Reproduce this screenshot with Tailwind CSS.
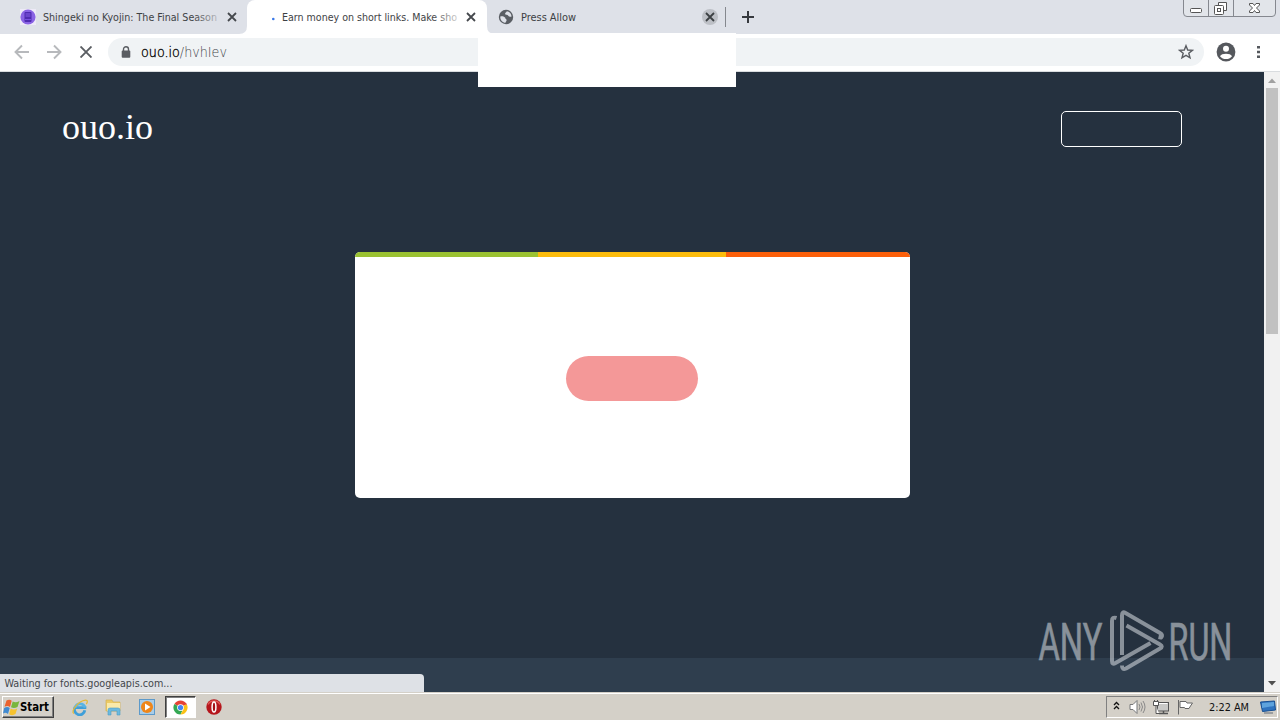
<!DOCTYPE html>
<html lang="en">
<head>
<meta charset="utf-8">
<title>ouo.io</title>
<script src="https://cdn.jsdelivr.net/npm/@tailwindcss/browser@4"></script>
</head>
<body class="w-[1280px] h-[720px] overflow-hidden flex flex-col relative bg-[#d4d0c8] font-['DejaVu_Sans_Condensed','DejaVu_Sans',sans-serif]">

<!-- Tab strip -->
<header class="h-[34px] shrink-0 bg-[#dee1e8] flex text-[11px] text-[#3c4043] relative">
  <div class="w-[247px] h-full flex items-center pl-5 shrink-0">
    <svg class="w-4 h-4 shrink-0" viewBox="0 0 16 16"><rect width="16" height="16" fill="#eeeaf8"/><circle cx="8" cy="8" r="7.6" fill="#8a63e4"/><rect x="4.500" y="3" width="7" height="10" rx="1" fill="#4f2bb0"/><rect x="5.500" y="4" width="5" height="4" fill="#6a43cb"/><path d="M5 10.500h6" stroke="#7950df"/></svg>
    <svg class="ml-[7px] w-[177px] h-5 shrink-0 overflow-visible" viewBox="0 0 177 20"><defs><linearGradient id="f1" gradientUnits="userSpaceOnUse" x1="150" x2="176" y1="0" y2="0"><stop stop-color="#3c4043"/><stop offset="1" stop-color="#3c4043" stop-opacity=".2"/></linearGradient></defs><text x="0" y="14" font-size="11" textLength="174" lengthAdjust="spacingAndGlyphs" fill="url(#f1)">Shingeki no Kyojin: The Final Season</text></svg>
    <svg class="ml-[7px] w-[10px] h-[10px]" viewBox="0 0 10 10"><path d="M1 1l8 8M9 1l-8 8" stroke="#45484d" stroke-width="1.8"/></svg>
  </div>
  <div class="w-[240px] h-full bg-white rounded-t-lg flex items-center shrink-0 relative">
    <svg class="ml-[25px] mt-1 w-[3px] h-[4px] shrink-0" viewBox="0 0 3 4"><circle cx="1.3" cy="2" r="1.3" fill="#3978e8"/></svg>
    <svg class="ml-[7px] w-[179px] h-5 shrink-0 overflow-visible" viewBox="0 0 179 20"><defs><linearGradient id="f2" gradientUnits="userSpaceOnUse" x1="150" x2="177" y1="0" y2="0"><stop stop-color="#3c4043"/><stop offset="1" stop-color="#3c4043" stop-opacity=".2"/></linearGradient></defs><text x="0" y="14" font-size="11" textLength="175" lengthAdjust="spacingAndGlyphs" fill="url(#f2)">Earn money on short links. Make sho</text></svg>
    <svg class="ml-[5px] w-[10px] h-[10px]" viewBox="0 0 10 10"><path d="M1 1l8 8M9 1l-8 8" stroke="#45484d" stroke-width="1.8"/></svg>
    <svg class="absolute -left-2 bottom-0 w-2 h-2" viewBox="0 0 8 8"><path d="M8 0v8H0Q8 8 8 0" fill="#fff"/></svg>
    <svg class="absolute -right-2 bottom-0 w-2 h-2" viewBox="0 0 8 8"><path d="M0 0v8h8Q0 8 0 0" fill="#fff"/></svg>
  </div>
  <div class="w-[239px] h-full flex items-center pl-[11px] shrink-0">
    <svg class="w-4 h-4 shrink-0" viewBox="0 0 16 16"><circle cx="8" cy="8" r="7.2" fill="#5a5e64"/><path d="M2.3 7.4c2.500-.5 4 .2 5 1.300-.2 1.500 1.500 1 1.300 2.500-.1 1.300-1.100 1.200-1 2.600C4.300 13.700 2 11 2.300 7.400zM8.800 2.300c-.3 1.500-1.800 1.200-1.700 2.700.8 1.500 2.300.4 3.200 1.700.6 1.100 2 1.200 3.300.7-.3-2.700-2.200-4.700-4.800-5.100z" fill="#dee1e8"/></svg>
    <svg class="ml-[7px] w-[181px] h-5 shrink-0" viewBox="0 0 181 20"><text x="0" y="14" font-size="11" textLength="55" lengthAdjust="spacingAndGlyphs" fill="#3c4043">Press Allow</text></svg>
    <svg class="w-4 h-4 shrink-0" viewBox="0 0 16 16"><circle cx="8" cy="8" r="8" fill="#bdc0c6"/><path d="M4 4l8 8M12 4l-8 8" stroke="#3c4043" stroke-width="1.8"/></svg>
    <div class="ml-[7px] w-px h-5 bg-[#85888e]"></div>
  </div>
  <div class="flex items-center pl-4"><svg class="w-3 h-3" viewBox="0 0 12 12"><path d="M6 0v12M0 6h12" stroke="#36393e" stroke-width="2"/></svg></div>
  <svg class="ml-auto mr-[4px] w-[93px] h-[18px]" viewBox="0 0 93 18"><path d="M.5 0v13q0 3.500 3.500 3.500h85q3.500 0 3.500-3.500V0M25.500 0v16.500M50.500 0v16.500" fill="#e2e5ea" stroke="#85888f"/><rect x="7.500" y="8.500" width="11" height="4" rx="1" fill="#fff" stroke="#555"/><path d="M35.500 2.500h8v8h-8z" fill="#fff" stroke="#555"/><rect x="31.500" y="5.500" width="9" height="9" rx="1" fill="#fff" stroke="#555"/><rect x="34.500" y="8.500" width="3" height="3" fill="#fff" stroke="#555"/><path d="M66.500 3.500h3.500l1.500 2 1.500-2h3.500v1.500l-3 3 3 3v1.500h-3.500l-1.500-2-1.500 2h-3.500v-1.500l3-3-3-3z" fill="#fff" stroke="#555"/></svg>
</header>

<!-- Toolbar -->
<div class="h-[38px] shrink-0 bg-white border-b border-[#d9dcdf] flex items-center pb-[2px]">
  <svg class="ml-[14px] w-4 h-4" viewBox="0 0 16 16"><path d="M15 8H2M8 1.500L1.500 8 8 14.500" fill="none" stroke="#b7b9bc" stroke-width="1.900"/></svg>
  <svg class="ml-4 w-4 h-4" viewBox="0 0 16 16"><path d="M1 8h13M8 1.500L14.500 8 8 14.500" fill="none" stroke="#b7b9bc" stroke-width="1.900"/></svg>
  <svg class="ml-[18px] w-3 h-3" viewBox="0 0 12 12"><path d="M.5.5l11 11M11.500.5l-11 11" stroke="#5a5d62" stroke-width="1.900"/></svg>
  <div class="ml-4 w-[1096px] h-7 rounded-full bg-[#f0f3f5] flex items-center">
    <svg class="ml-[13px] w-[10px] h-3" viewBox="0 0 10 12"><path d="M2.500 5V3.200a2.500 2.500 0 015 0V5" fill="none" stroke="#5a5d62" stroke-width="1.400"/><rect x=".7" y="4.500" width="8.600" height="7.200" rx="1" fill="#5a5d62"/></svg>
    <svg class="ml-[10px] w-[100px] h-6" viewBox="0 0 100 24"><text x="0" y="17" font-size="14" textLength="86" lengthAdjust="spacingAndGlyphs" fill="#44474b" font-family="'DejaVu Sans','DejaVu Sans Condensed',sans-serif" font-weight="200"><tspan fill="#000" stroke="#000" stroke-width=".35">ouo.io</tspan>/hvhIev</text></svg>
    <svg class="ml-auto mr-[10px] w-4 h-4" viewBox="0 0 16 16"><path d="M8 1.700l1.700 4.300 4.700.3-3.600 3 1.200 4.500L8 11.300l-4 2.500 1.200-4.500-3.600-3L6.300 6z" fill="none" stroke="#5a5d62" stroke-width="1.400"/></svg>
  </div>
  <svg class="ml-3 w-5 h-5" viewBox="0 0 20 20"><circle cx="10" cy="10" r="9.400" fill="#55585d"/><circle cx="10" cy="6.800" r="3" fill="#fff"/><path d="M4 14.200c1.300-3.300 10.700-3.300 12 0-3 3.800-9 3.800-12 0z" fill="#fff"/></svg>
  <svg class="ml-5 w-[5px] h-[14px]" viewBox="0 0 5 14"><path d="M1 1h3v2.600H1zM1 5.700h3v2.600H1zM1 10.400h3V13H1z" fill="#55585d"/></svg>
</div>

<!-- Page -->
<main class="h-[620px] shrink-0 flex relative">
  <div class="w-[1264px] h-full bg-[#25313f] flex flex-col">
    <div class="h-[75px] shrink-0 flex items-start justify-between pl-[62px] pr-[82px]">
      <svg class="mt-[36px] w-[100px] h-10" viewBox="0 0 100 40"><text x="0" y="31" font-size="35" textLength="91" lengthAdjust="spacingAndGlyphs" fill="#fff" font-family="'Liberation Serif',serif">ouo.io</text></svg>
      <div class="mt-[39px] w-[121px] h-9 border border-white rounded-[5px]"></div>
    </div>
    <div class="mt-[105px] ml-[355px] w-[555px] h-[246px] shrink-0 bg-white rounded-[5px] overflow-hidden">
      <div class="h-[5px] flex"><div class="w-[183px] bg-[#9bc232]"></div><div class="w-[188px] bg-[#fcbc0c]"></div><div class="flex-1 bg-[#fb5f0a]"></div></div>
      <div class="mt-[99px] ml-[211px] w-[132px] h-[45px] rounded-full bg-[#f49898]"></div>
    </div>
    <div class="mt-auto h-[34px] bg-[#2f3e4e] flex items-end"><div class="w-[424px] h-[18px] bg-[#dee1e6] rounded-tr-[4px]"><svg class="w-[200px] h-[18px]" viewBox="0 0 200 18"><text x="4.500" y="13" font-size="11" textLength="168" lengthAdjust="spacingAndGlyphs" fill="#44474b">Waiting for fonts.googleapis.com...</text></svg></div></div>
  </div>
  <div class="w-4 h-full bg-[#f1f1f1] flex flex-col items-center justify-between">
    <div class="flex flex-col items-center"><svg class="w-4 h-4" viewBox="0 0 16 16"><path d="M4 11l4-4.500 4 4.500z" fill="#a0a0a0"/></svg><div class="w-3 h-[246px] bg-[#c1c1c1]"></div></div>
    <svg class="w-4 h-4" viewBox="0 0 16 16"><path d="M4 5h8l-4 4.500z" fill="#505050"/></svg>
  </div>
  <!-- Watermark -->
  <svg class="absolute left-[1036px] top-[534px] w-[200px] h-[70px]" viewBox="0 0 200 70" opacity=".55">
    <g fill="#dce0e5" stroke="#dce0e5" stroke-width=".6" font-family="Roboto,sans-serif" font-size="52.500"><text x="0" y="0" transform="translate(2.500 53.500) scale(.62 1)" textLength="103" lengthAdjust="spacingAndGlyphs">ANY</text><text x="0" y="0" transform="translate(132.500 53.500) scale(.62 1)" textLength="103" lengthAdjust="spacingAndGlyphs">RUN</text></g>
    <g fill="none" stroke="#dce0e5" stroke-width="4" stroke-linejoin="round"><path d="M80.500 12Q76 10.500 76 15V55Q76 59 79.500 57L114.500 37"/><path d="M86 49V9.500Q86 5 89.500 7L124 27Q127.500 29 125 31.500L122.500 31"/><path d="M90.500 19.500L124 38.500Q127.500 40.500 124 42.500L90 62.500Q86 64.500 86 59.500"/></g>
  </svg>
</main>

<!-- Tab tooltip -->
<div class="absolute left-[478px] top-[33px] w-[258px] h-[54px] bg-white"></div>

<!-- Taskbar -->
<footer class="h-7 shrink-0 bg-[#d4d0c8] border-t border-[#d4d0c8] shadow-[inset_0_1px_0_#fff] flex items-center">
  <div class="ml-[2px] mt-[1px] w-[52px] h-[22px] border border-t-white border-l-white border-r-[#404040] border-b-[#404040] shadow-[inset_-1px_-1px_0_#808080] flex items-center">
    <svg class="w-[17px] h-[17px] shrink-0" viewBox="0 0 17 17"><path d="M3.500 1.500Q6.500-.3 8.700 1.700L7 8Q4.500 6 1.500 7.800z" fill="#ea6330"/><path d="M9.700 2.500q3 1.700 6.800-.5L14.500 8q-3.500 2-6.500.3z" fill="#79b63c"/><path d="M1.200 9q3-2 5.500 0L5 15Q2.500 13 0 14.500z" fill="#418ad0"/><path d="M7.700 9.400q3 2 6.500 0l-1.700 5.700q-3.200 2-6.300.2z" fill="#f6c22e"/></svg>
    <svg class="w-[31px] h-5" viewBox="0 0 31 20"><text x="0" y="14" font-size="11.5" font-weight="bold" textLength="29" lengthAdjust="spacingAndGlyphs">Start</text></svg>
  </div>
  <svg class="ml-[17px] w-[18px] h-[18px]" viewBox="0 0 18 18"><path d="M13.800 12.300A5.200 5.200 0 114.200 8.900M4 9.600h11.300" fill="none" stroke="#3f9fd9" stroke-width="2.800"/><path d="M4.100 9.600a5.200 5.200 0 0110 0" fill="none" stroke="#59b4e4" stroke-width="2.800"/><path d="M3 15.500C-1 14 7 3 14.500 2.200c2.500-.2 2 2.300.8 4" fill="none" stroke="#e5b935" stroke-width="1.200"/></svg>
  <svg class="ml-4 w-[17px] h-[18px]" viewBox="0 0 17 18"><path d="M1 2h6l1 2h7v9H1z" fill="#ebca65" stroke="#d2b152" stroke-width=".7"/><path d="M2 5h13v8H2z" fill="#f9e9a9"/><path d="M3 17v-5q0-2 2-2h8q2 0 2 2v5h-3v-4H6v4z" fill="#6bb9df" stroke="#4b9bc5" stroke-width=".6"/></svg>
  <svg class="ml-[17px] w-4 h-4" viewBox="0 0 16 16"><rect x=".5" y=".5" width="15" height="15" fill="#a9cde8" stroke="#5d9aca"/><circle cx="8" cy="8" r="6" fill="#ef8619"/><path d="M6 4.500L11.500 8 6 11.500z" fill="#fff"/></svg>
  <div class="ml-[10px] mt-[1px] w-[31px] h-[22px] border border-t-[#404040] border-l-[#404040] border-r-white border-b-white shadow-[inset_1px_1px_0_#808080] bg-white flex items-center justify-center">
    <svg class="w-[15px] h-[15px]" viewBox="0 0 16 16"><path d="M8 8L1.500 4.200A7.500 7.500 0 0114.500 4.200z" fill="#e54335"/><path d="M8 8L1.500 4.200A7.500 7.500 0 008 15.500l2-4z" fill="#34a853"/><path d="M8 8L14.500 4.200A7.500 7.500 0 018 15.500l3-5.500z" fill="#fbc116"/><path d="M8 4.400h6.600" stroke="#e54335" stroke-width="1"/><circle cx="8" cy="8" r="3.600" fill="#fff"/><circle cx="8" cy="8" r="2.800" fill="#4285f4"/></svg>
  </div>
  <svg class="ml-[10px] w-4 h-4" viewBox="0 0 16 16"><circle cx="8" cy="8" r="7.700" fill="#b5161c"/><path d="M2 5.500a6.500 5.500 0 0112 0" fill="none" stroke="#df5552" stroke-width="1.500"/><ellipse cx="8" cy="8" rx="1.900" ry="5" fill="#a50f15" stroke="#fff" stroke-width="1.500"/></svg>
  <div class="ml-auto mr-[2px] mt-[1px] w-[172px] h-[22px] border border-t-[#808080] border-l-[#808080] border-r-white border-b-white flex items-center pl-[6px]">
    <svg class="w-[7px] h-[9px] -mt-[3px]" viewBox="0 0 7 9"><path d="M1 4l2.500-2.500L6 4M1 8l2.500-2.500L6 8" fill="none" stroke="#111" stroke-width="1.300"/></svg>
    <svg class="ml-[9px] w-[17px] h-4" viewBox="0 0 17 16"><path d="M1 5.500h3L8 1.500v13l-4-4H1z" fill="#fff" stroke="#77787a"/><path d="M10 5q2 3 0 6M12 3.500q3 4.500 0 9M14 2q4 6 0 12" fill="none" stroke="#898989"/></svg>
    <svg class="ml-[7px] w-[17px] h-4" viewBox="0 0 17 16"><rect x="4.500" y="3.500" width="11" height="8.500" fill="#c9c9c7" stroke="#555"/><path d="M5.500 4.500h9" stroke="#fff"/><path d="M6 14.500h9M10.500 12v2.500" stroke="#555" stroke-width="1.500"/><path d="M.5 2.500h5v4h-5zM1.500 1v1.500M4.500 1v1.500M3 6.500v8h3" fill="#fff" stroke="#555"/></svg>
    <svg class="ml-[7px] w-[17px] h-4" viewBox="0 0 17 16"><path d="M1.500 1v14.500M3 2.500h6l1 1.500h5.500L13.500 7l-1.500 2.500H8L7.500 8.500H3z" fill="#fff" stroke="#666"/></svg>
    <svg class="ml-[15px] w-[42px] h-5" viewBox="0 0 42 20"><text x="0" y="14" font-size="11" textLength="40" lengthAdjust="spacingAndGlyphs" fill="#111">2:22 AM</text></svg>
    <svg class="ml-[9px] w-4 h-[14px]" viewBox="0 0 16 14"><path d="M.5 2l14-1 1 9-13 1.500z" fill="#2f73bf" stroke="#184f91"/><path d="M2 3l12-1v4L2 8z" fill="#5ea3dd"/><path d="M4 13h9" stroke="#606b78"/></svg>
  </div>
</footer>
</body>
</html>
